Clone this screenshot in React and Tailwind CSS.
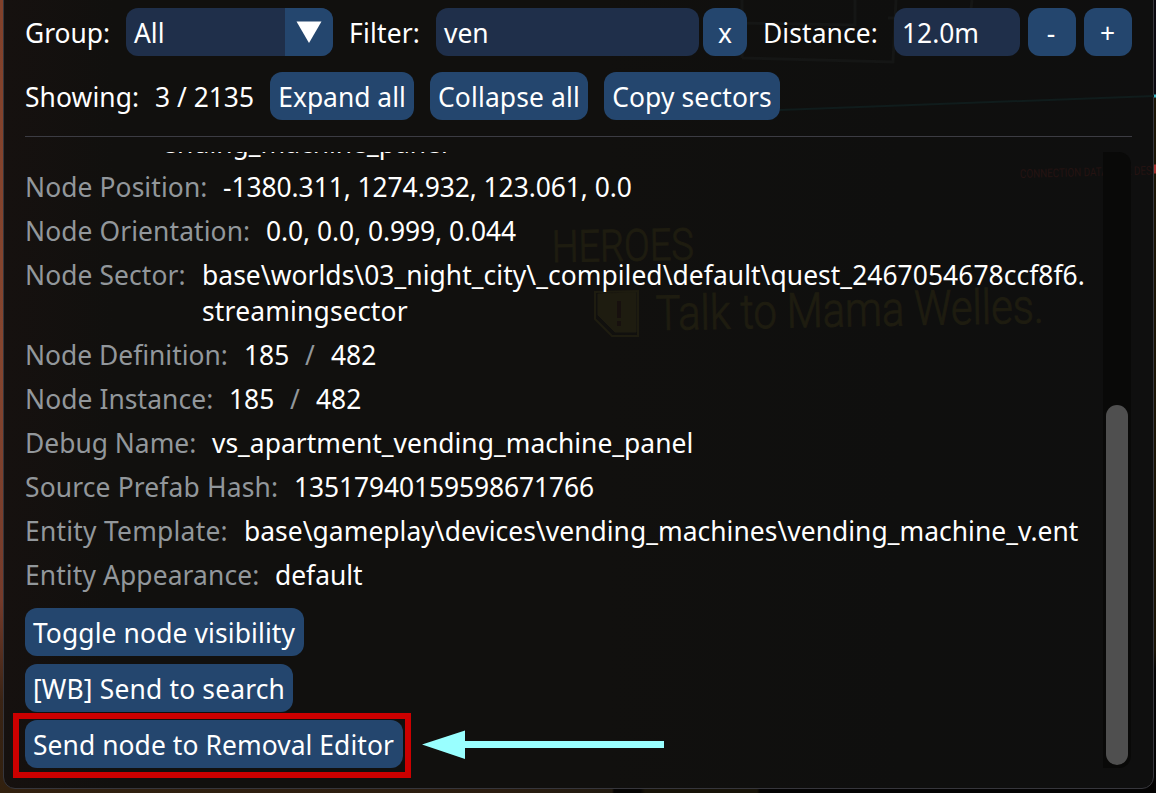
const button =
  "flex h-12 shrink-0 items-center justify-center rounded-xl bg-[#24466e] pt-0.5 whitespace-pre";

function Button({ className, children }) {
  return <button className={`${button} ${className}`}>{children}</button>;
}

function Row({ label, labelClass, valueClass = "", children }) {
  return (
    <div className="flex">
      <span className={`shrink-0 text-[#92979b] ${labelClass}`}>{label}</span>
      <span className={valueClass}>{children}</span>
    </div>
  );
}

function Fraction({ a, b }) {
  return (
    <span className="flex">
      <span className="w-[61px]">{a}</span>
      <span className="w-[26px] text-[#92979b]">/</span>
      <span>{b}</span>
    </span>
  );
}

function GameBackdrop() {
  return (
    <svg
      className="pointer-events-none absolute top-4 left-0"
      width="1156"
      height="793"
      viewBox="0 0 1156 793"
      fontFamily="Roboto, sans-serif"
    >
      <g fill="none" stroke="#151615" strokeWidth="3">
        <path d="M742 0V23L855 25V0M742 58L893 62L896 0M742 23V58M972 0L970 18L888 18" />
      </g>
      <path d="M780 110L1154 96" stroke="#101c1c" strokeWidth="2" />
      <g fill="#1e1c10" stroke="#1e1c10" strokeWidth="1">
        <text x="552" y="262" fontSize="44" fontWeight="300" textLength="142" lengthAdjust="spacingAndGlyphs" transform="rotate(-1 552 262)">HEROES</text>
        <text x="656" y="330" fontSize="48" fontWeight="300" textLength="388" lengthAdjust="spacingAndGlyphs" transform="rotate(-1.1 656 330)">Talk to Mama Welles.</text>
        <path d="M598 294L636 292V332H615L598 315Z" />
      </g>
      <path d="M595 292L638 291V336H612L595 319Z" fill="none" stroke="#1e1c10" strokeWidth="2" />
      <path d="M617 301H621V318H617ZM617 321H621V326H617Z" fill="#17100e" />
      <text x="1020" y="178" fontSize="12" fill="#251312" textLength="132" lengthAdjust="spacingAndGlyphs" transform="rotate(-1.5 1020 178)">CONNECTION DATABASE DES</text>
    </svg>
  );
}

export default function App() {
  return (
    <div className="relative flex h-[793px] w-[1156px] overflow-hidden bg-[linear-gradient(90deg,#32210f_0px,#2b1d10_500px,#211a10_612px,#060504_614px,#060504_640px,#171308_645px,#171308_757px,#040303_760px,#040303_1156px)] font-['Noto_Sans',sans-serif] text-[26.4px] leading-9 whitespace-pre text-white">
      <div className="absolute top-0 left-0 h-[793px] w-1 bg-[linear-gradient(180deg,#82412b_0px,#85452f_350px,#753b2b_600px,#3a2415_700px,#32210f_793px)]" />
      <div className="absolute top-0 left-[1154px] h-[793px] w-[2px] bg-[linear-gradient(180deg,#0b0910_0px,#0b0910_94px,#39b5c4_95px,#39b5c4_97px,#1b1405_98px,#1b1405_164px,#a5322d_165px,#a5322d_173px,#1b1405_174px,#1b1405_650px,#050404_670px)]" />
      <main className="relative -mt-4 ml-[3px] flex h-[805px] w-[1151px] flex-col rounded-xl border border-[#36363c] bg-[linear-gradient(90deg,#16110f_0px,#11100e_110px,#11100e_600px,#0f0f0e_900px,#0f0f0f_1150px)] pt-[23px] pl-[21px]">
        <div className="absolute -top-[1px] -left-[4px]">
          <GameBackdrop />
        </div>

        <header className="relative flex h-12 items-center">
          <span className="w-[101px] pt-0.5">Group:</span>
          <div className="flex h-12 w-[207px] overflow-hidden rounded-xl bg-[#1f2f4a]">
            <span className="flex w-[159px] items-center pt-0.5 pl-2">All</span>
            <span className="flex w-12 items-center justify-center bg-[#24466e]">
              <svg width="26" height="22" viewBox="0 0 26 22" className="-mt-[1px]">
                <path d="M0.500 0.500H25.500L13 22Z" fill="#fff" />
              </svg>
            </span>
          </div>
          <span className="ml-4 w-[87px] pt-0.5 tracking-[0.2px]">Filter:</span>
          <span className="flex h-12 w-[263px] items-center rounded-xl bg-[#1f2f4a] pt-0.5 pl-2">ven</span>
          <Button className="ml-1 w-11">x</Button>
          <span className="ml-4 w-[131px] pt-0.5 tracking-[0.1px]">Distance:</span>
          <span className="flex h-12 w-[126px] items-center rounded-xl bg-[#1f2f4a] pt-0.5 pl-2">12.0m</span>
          <Button className="ml-2 w-12 pr-0.5">-</Button>
          <Button className="ml-2 w-12 pr-px">+</Button>
        </header>

        <section className="relative mt-4 flex h-12 items-center">
          <span className="w-[130px] pt-0.5 tracking-[0.1px]">Showing:</span>
          <span className="w-[115px] pt-0.5">3 / 2135</span>
          <Button className="w-36">Expand all</Button>
          <Button className="ml-4 w-[158px] tracking-[0.15px]">Collapse all</Button>
          <Button className="ml-4 w-44 tracking-[0.15px]">Copy sectors</Button>
        </section>

        <div className="relative mt-4 h-px w-[1107px] shrink-0 bg-[#3c3c43]" />

        <div className="relative mt-[15px] flex h-[616px] w-[1106px] shrink-0">
          <div className="flex w-[1078px] flex-col overflow-hidden">
            <div className="-mt-[27px] flex flex-col gap-2">
              <span className="pl-[137px]">ending_machine_panel</span>
              <Row label="Node Position:" labelClass="w-[198px] tracking-[0.1px]" valueClass="tracking-[-0.06px]">-1380.311, 1274.932, 123.061, 0.0</Row>
              <Row label="Node Orientation:" labelClass="w-[241px] tracking-[0.1px]" valueClass="tracking-[-0.05px]">0.0, 0.0, 0.999, 0.044</Row>
              <Row label="Node Sector:" labelClass="w-[177px] tracking-[0.1px]">
                <span className="tracking-[0.06px]">
                  {"base\\worlds\\03_night_city\\_compiled\\default\\quest_2467054678ccf8f6."}
                </span>
                <br />
                <span className="tracking-[0.2px]">streamingsector</span>
              </Row>
              <Row label="Node Definition:" labelClass="w-[219px]"><Fraction a="185" b="482" /></Row>
              <Row label="Node Instance:" labelClass="w-[204px] tracking-[0.08px]"><Fraction a="185" b="482" /></Row>
              <Row label="Debug Name:" labelClass="w-[187px]" valueClass="tracking-[0.03px]">vs_apartment_vending_machine_panel</Row>
              <Row label="Source Prefab Hash:" labelClass="w-[269px] tracking-[0.16px]" valueClass="tracking-[-0.1px]">13517940159598671766</Row>
              <Row label="Entity Template:" labelClass="w-[219px] tracking-[0.25px]" valueClass="tracking-[0.04px]">{"base\\gameplay\\devices\\vending_machines\\vending_machine_v.ent"}</Row>
              <Row label="Entity Appearance:" labelClass="w-[250px] tracking-[0.12px]">default</Row>
            </div>
            <div className="mt-[15px] flex flex-col items-start gap-2">
              <Button className="w-[279px] pr-px tracking-[0.13px]">Toggle node visibility</Button>
              <Button className="w-[268px] tracking-[0.18px]">[WB] Send to search</Button>
              <Button className="w-[378px] pr-px tracking-[0.08px]">Send node to Removal Editor</Button>
            </div>
          </div>
          <div className="flex w-7 flex-col items-center justify-end rounded-r-xl bg-[#090908] pb-[3px]">
            <div className="h-[360px] w-[22px] rounded-full bg-[#4f4f4f]" />
          </div>
        </div>
      </main>

      <div className="absolute top-[713px] left-[13px] h-[65px] w-[398px] border-6 border-[#cc0000]" />
      <svg className="absolute top-[730px] left-[422px]" width="243" height="30" viewBox="0 0 243 30">
        <path d="M0 14.500L43 0.500V11H242V18H43V29Z" fill="#99ffff" />
      </svg>
    </div>
  );
}
